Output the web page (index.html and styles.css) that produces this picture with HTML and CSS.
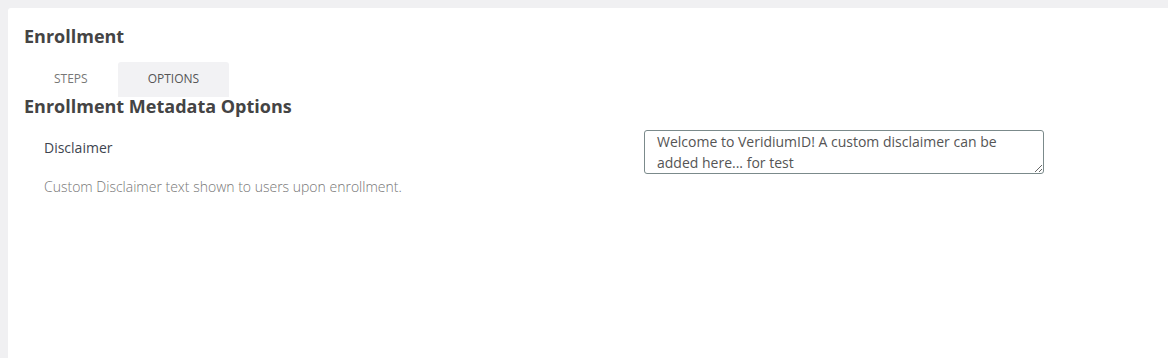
FILE: index.html
```html
<!DOCTYPE html>
<html lang="en">
<head>
    <meta charset="UTF-8">
    <title>Enrollment</title>
    <link rel="stylesheet" href="styles.css">
</head>
<body>
    <div class="card">
        <h1 class="title">Enrollment</h1>
        <div class="tabs">
            <div class="tab">STEPS</div>
            <div class="tab active">OPTIONS</div>
        </div>
        <h2 class="section">Enrollment Metadata Options</h2>
        <div class="option_row">
            <div class="option_info">
                <div class="option_label">Disclaimer</div>
                <div class="option_desc">Custom Disclaimer text shown to users upon enrollment.</div>
            </div>
            <textarea class="option_input">Welcome to VeridiumID! A custom disclaimer can be added here... for test</textarea>
        </div>
    </div>
</body>
</html>
```

FILE: styles.css
```css
html, body {
    height: 100%;
}
body {
    margin: 0;
    padding: 8px 0 0 8px;
    box-sizing: border-box;
    background-color: #f0f0f2;
    font-family: 'Open Sans', sans-serif;
    color: #444;
}
.card {
    background-color: #fff;
    border-top-left-radius: 3px;
    height: 100%;
    padding: 18px 16px 0 16px;
    box-sizing: border-box;
}
.title {
    font-size: 18px;
    font-weight: 700;
    color: #444;
    margin: 0;
    line-height: 20px;
}
.tabs {
    display: flex;
    margin-top: 16px;
}
.tab {
    padding: 0 30px;
    height: 35px;
    line-height: 33px;
    font-size: 12px;
    color: #777;
    border-radius: 3px 3px 0 0;
}
.tab.active {
    background-color: #f2f2f4;
    color: #555;
}
.section {
    font-size: 18px;
    font-weight: 700;
    color: #444;
    margin: -3px 0 0 0;
    line-height: 24px;
}
.option_row {
    display: flex;
    margin-top: 12px;
    padding-left: 20px;
}
.option_info {
    width: 600px;
}
.option_label {
    font-size: 14px;
    color: #3e4550;
    margin-top: 8px;
    line-height: 20px;
}
.option_desc {
    font-size: 14px;
    font-weight: 300;
    color: #777;
    margin-top: 19px;
    line-height: 20px;
}
.option_input {
    width: 400px;
    height: 44px;
    box-sizing: border-box;
    border: 1px solid #7b8a8b;
    border-radius: 3px;
    padding: 0 12px;
    font-family: 'Open Sans', sans-serif;
    font-size: 14px;
    line-height: 21px;
    color: #555;
    margin: 0;
    outline: none;
}
```
